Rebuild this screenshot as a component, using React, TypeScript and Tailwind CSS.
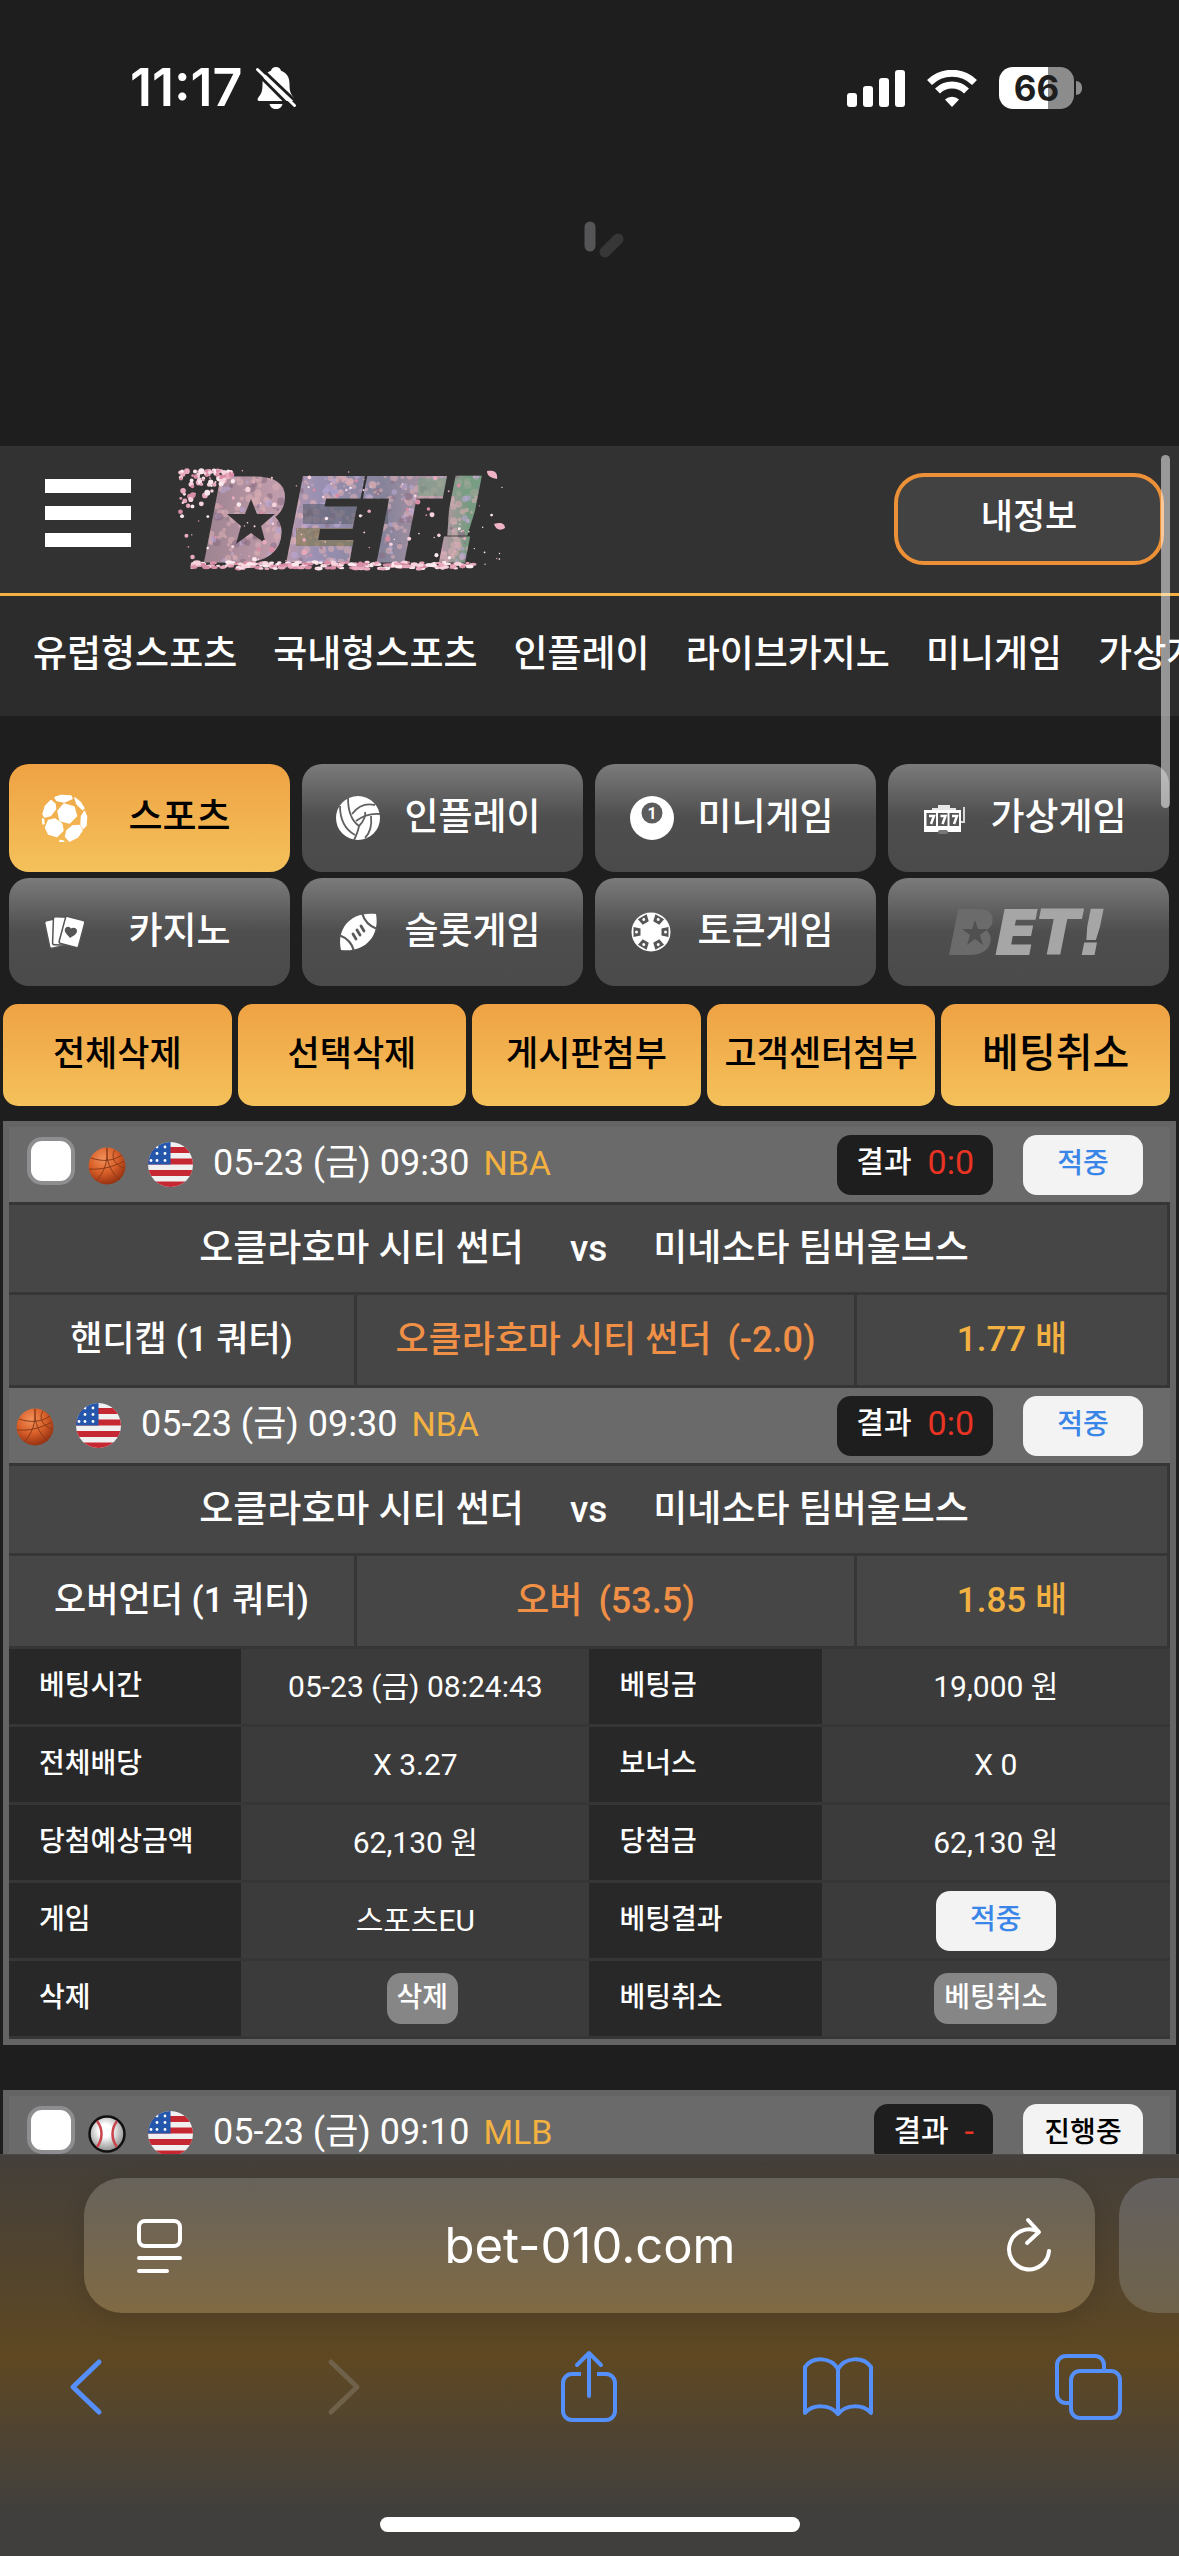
import type { ReactNode } from "react";
import { clsx } from "clsx";

const gold = "bg-linear-to-b from-[#efa243] to-[#f4c15a]";
const steel = "bg-linear-to-b from-[#7b7b7b] via-[#4e4e4e] to-[#4a4a4a]";

const navItems = ["유럽형스포츠", "국내형스포츠", "인플레이", "라이브카지노", "미니게임", "가상게임"];

const actions = ["전체삭제", "선택삭제", "게시판첨부", "고객센터첨부"];

/* ---------- status bar ---------- */

function BellOffIcon() {
  return (
    <svg viewBox="0 0 42 44" className="h-11 w-[42px]" fill="#fff">
      <path d="M21 1c-2.600 0-4.600 1.600-5 3.800C9.500 7.200 7.500 12 7.500 18c0 7-1 9.500-3.500 12.500C2 33 2 35 5 35h32c3 0 3-2 1-4.500-2.500-3-3.500-5.500-3.500-12.500 0-6-2-10.800-8.500-13.200C25.600 2.600 23.600 1 21 1z" />
      <path d="M14.500 38h13c-.6 3-3.200 5-6.500 5s-5.900-2-6.500-5z" />
      <path d="M3 -0.500l39 37" stroke="#1e1e1e" strokeWidth="3" />
      <path d="M0 5.500l37 37" stroke="#1e1e1e" strokeWidth="3" />
      <path d="M2.500 3.500l37 36" stroke="#fff" strokeWidth="3" strokeLinecap="round" />
    </svg>
  );
}

function SignalIcon() {
  return (
    <svg viewBox="0 0 58 37" className="h-[37px] w-[58px]" fill="#fff">
      <rect x="0" y="23" width="10" height="14" rx="3" />
      <rect x="16" y="16" width="10" height="21" rx="3" />
      <rect x="32" y="8" width="10" height="29" rx="3" />
      <rect x="48" y="0" width="10" height="37" rx="3" />
    </svg>
  );
}

function WifiIcon() {
  return (
    <svg viewBox="0 0 50 37" className="h-[37px] w-[50px]" fill="none" stroke="#fff" strokeWidth="7">
      <path d="M2.500 12.500a32 32 0 0 1 45 0" />
      <path d="M10.500 21a20.500 20.500 0 0 1 29 0" />
      <path d="M25 37l-7-7.500a10 10 0 0 1 14 0z" fill="#fff" stroke="none" />
    </svg>
  );
}

function StatusBar() {
  return (
    <div className="flex items-center justify-between pt-[60px] pr-[97px] pl-[130px] font-['Inter',sans-serif]">
      <div className="flex items-center gap-3">
        <span className="text-[52px] leading-[56px] font-semibold text-white">11:17</span>
        <BellOffIcon />
      </div>
      <div className="flex items-center gap-[22px]">
        <SignalIcon />
        <WifiIcon />
        <div className="flex items-center gap-0.5">
          <div className="flex h-[42px] w-[75px] items-center justify-center rounded-[14px] bg-linear-to-r from-white from-66% to-[#8c8c8c] to-66% text-[35px] leading-none font-bold text-[#1e1e1e]">
            66
          </div>
          <div className="h-3.5 w-1.5 rounded-r-full bg-[#8c8c8c]" />
        </div>
      </div>
    </div>
  );
}

function Spinner() {
  return (
    <svg viewBox="0 0 90 90" className="mx-auto mt-[101px] h-[90px] w-[90px]" strokeLinecap="round" strokeWidth="11">
      <path d="M45 10v19" stroke="#555557" />
      <path d="M60 35l13-13" stroke="#373738" />
    </svg>
  );
}

/* ---------- site header ---------- */

// Fixed seed so that the petals fall in the same spots on every render.
function scatter(count: number, seed: number) {
  let s = seed;
  const next = () => {
    s = (s * 16807) % 2147483647;
    return s / 2147483647;
  };
  return Array.from({ length: count }, () => [next(), next(), next()]);
}

const petalColors = ["#e9a9bd", "#f6d3dc", "#d78da5", "#fbe9ee"];
const blossoms = scatter(600, 77);
const loosePetals = scatter(110, 4211);
const groundPetals = scatter(230, 909);
const branchPetals = scatter(90, 313);

function BlossomLogo() {
  return (
    <svg viewBox="0 0 330 104" className="h-[104px] w-[330px] overflow-visible" role="img" aria-label="BET!">
      <defs>
        <mask id="wordmark" maskUnits="userSpaceOnUse" x="0" y="0" width="330" height="104">
          <text
            x="28"
            y="91"
            fontFamily="DejaVu Sans"
            fontWeight="700"
            fontStyle="italic"
            fontSize="108"
            fill="#fff"
            stroke="#fff"
            strokeWidth="7"
          >
            BET!
          </text>
          <rect x="50" y="22" width="44" height="60" rx="8" fill="#fff" />
        </mask>
        <linearGradient id="dusk" x1="0" y1="0" x2="1" y2="0">
          <stop offset="0.1" stopColor="#a08592" />
          <stop offset="0.3" stopColor="#c09cab" />
          <stop offset="0.42" stopColor="#9a90b2" />
          <stop offset="0.62" stopColor="#85839a" />
          <stop offset="0.8" stopColor="#b598a6" />
          <stop offset="0.88" stopColor="#769b80" />
          <stop offset="1" stopColor="#7c9a8a" />
        </linearGradient>
      </defs>
      <g mask="url(#wordmark)">
        <rect width="330" height="104" fill="url(#dusk)" />
        {blossoms.map(([a, b, c], i) => (
          <circle
            key={i}
            cx={20 + a * 290}
            cy={8 + b * 88}
            r={1 + c * 3}
            fill={i % 3 ? "#d8adb4" : i % 2 ? "#8b6f86" : "#b9a8d6"}
            opacity="0.6"
          />
        ))}
        <rect x="125" y="36" width="85" height="20" fill="#5d6272" opacity="0.65" />
        <rect x="118" y="60" width="70" height="18" fill="#7b7448" opacity="0.6" />
        <rect x="240" y="10" width="80" height="18" fill="#78a083" opacity="0.6" />
        <path d="M73 31l6 15h18l-14 12 5 18-15-11-15 11 5-18-14-12h18z" fill="#343233" />
      </g>
      {branchPetals.map(([a, b, c], i) => (
        <circle key={i} cx={2 + a * 52} cy={3 + b * b * 44 * (1.1 - a)} r={1 + c * 2} fill={petalColors[i % 4]} />
      ))}
      {loosePetals.map(([a, b, c], i) => (
        <circle key={i} cx={4 + a * 320} cy={2 + b * 96} r={0.7 + c * c * 2.2} fill={petalColors[i % 4]} />
      ))}
      {groundPetals.map(([a, b, c], i) => (
        <ellipse key={i} cx={14 + a * 282} cy={94 + b * 7} rx={2 + c * 2} ry={1 + c} fill={petalColors[i % 4]} />
      ))}
      <path d="M309 3c7-1 11 1 10 8-6-1-10-3-10-8zM316 56c6-2 11-1 11 4-5 3-9 2-11-4z" fill="#efb3c5" />
    </svg>
  );
}

function SiteHeader() {
  return (
    <header className="flex h-[150px] items-center border-b-3 border-[#f2b141] bg-[#323232] pr-[15px] pl-[45px]">
      <button type="button" aria-label="메뉴" className="mb-3.5 flex flex-col gap-[13px]">
        <span className="h-3.5 w-[86px] bg-white" />
        <span className="h-3.5 w-[86px] bg-white" />
        <span className="h-3.5 w-[86px] bg-white" />
      </button>
      <div className="ml-[47px]">
        <BlossomLogo />
      </div>
      <button
        type="button"
        className="mb-0.5 ml-auto h-[92px] w-[270px] rounded-[30px] border-4 border-[#ec9137] bg-[#424242] text-[35px] font-medium text-white"
      >
        내정보
      </button>
    </header>
  );
}

function SiteNav() {
  return (
    <nav className="flex h-[120px] items-center gap-9 overflow-hidden bg-[#2c2c2c] pb-0.5 pl-[33px] text-[37px] font-medium whitespace-nowrap text-white">
      {navItems.map((item) => (
        <a key={item} href="#">
          {item}
        </a>
      ))}
    </nav>
  );
}

/* ---------- game tabs ---------- */

function SoccerIcon() {
  return (
    <svg viewBox="0 0 48 48" className="size-12">
      <g fill="#fff" stroke="#fff" strokeLinejoin="round" strokeWidth="1.500">
        <path d="M23 10l10 3 2.500 9-7 7-9.500-2.500-2-9.500z" />
        <path d="M14 3.500l6-2 10 .5 1 2.500-8 3.500-7-1.500z" />
        <path d="M34 4l5 4 4 6.500-1.500 1-5.500-5.500z" />
        <path d="M10 6.500l4 3.500.5 5-5 6.500L3.500 23 2 20l2.500-8z" />
        <path d="M43.500 17.500l2 5-.5 9-3 3-2-4 .5-8z" />
        <path d="M7.500 26.500L14 25l6.500 4.500 1.500 7-6 6-8.500-2.500-3-6.500z" />
        <path d="M31.500 32l7-.5 2.500 5-4.500 6.500-8 4-4-4.500 1.500-6z" />
        <path d="M1.500 25l1 .5.5 4-1 .5zM19 46.500l3 .5 1 1h-4z" />
      </g>
    </svg>
  );
}

function VolleyballIcon() {
  return (
    <svg viewBox="0 0 48 48" className="size-12">
      <circle cx="24" cy="24" r="22" fill="#fff" />
      <g fill="none" stroke="#606060" strokeWidth="1.800">
        <path d="M14 4c0 13 4 23 11 28-1 6-3 10-5 14" />
        <path d="M18 20C24 12 32 9 41 11M25 32c5-5 7-11 6-14" />
        <path d="M6 12c0 14 6 24 15 29" />
        <path d="M22 27c8-6 15-8 24-7" />
        <path d="M37 22c1 9-1 17-6 22" />
      </g>
    </svg>
  );
}

function BilliardIcon() {
  return (
    <svg viewBox="0 0 48 48" className="size-12">
      <circle cx="25" cy="24" r="22" fill="#fff" />
      <circle cx="25" cy="19" r="10.500" fill="#5c5c5c" />
      <text x="25" y="25" textAnchor="middle" fontFamily="Roboto" fontWeight="700" fontSize="16" fill="#fff">
        1
      </text>
    </svg>
  );
}

function SlotIcon() {
  return (
    <svg viewBox="0 0 48 48" className="size-12">
      <path d="M12 14h6v-3h12v3h6v3H12z" fill="#e8e8e8" />
      <path d="M4 16h37v22H4z" fill="#fff" />
      <path d="M41 28h3V13" stroke="#d6d6d6" strokeWidth="2" fill="none" />
      <path d="M6.500 19h9.500v13H6.500zM18 19h9.500v13H18zM29.500 19h9.500v13h-9.500z" fill="#565656" />
      <path d="M9 22h5l-3 8M20.500 22h5l-3 8M32 22h5l-3 8" stroke="#fff" strokeWidth="2.500" fill="none" />
      <rect x="18" y="36" width="10" height="4" rx="2" fill="#777" />
    </svg>
  );
}

function CardsIcon() {
  return (
    <svg viewBox="0 0 48 48" className="size-12" stroke="#555" strokeWidth="1.500">
      <rect x="6" y="11" width="18" height="28" rx="2" fill="#fff" transform="rotate(-12 15 25)" />
      <rect x="12" y="9" width="18" height="28" rx="2" fill="#fff" transform="rotate(2 21 23)" />
      <rect x="21" y="10" width="20" height="28" rx="2" fill="#fff" transform="rotate(15 31 24)" />
      <path d="M29 30c-4-5-6-6-5-9 1-2.500 4-3 6-.5 2.500-1.500 6-.5 6 2.500 0 3-3 4.500-7 7z" fill="#555" stroke="none" />
    </svg>
  );
}

function FootballIcon() {
  return (
    <svg viewBox="0 0 48 48" className="size-12">
      <path d="M7 42C2 20 17 3 42 6c4 22-11 39-35 36z" fill="#fff" />
      <path d="M28 5c2 7 7 13 15 16M5 27c8 3 13 8 15 16" fill="none" stroke="#5a5a5a" strokeWidth="2.200" />
      <path d="M19 26l3 5M23 22l3 5M27 18l3 5" stroke="#5a5a5a" strokeWidth="2.800" strokeLinecap="round" />
    </svg>
  );
}

function ChipIcon() {
  return (
    <svg viewBox="0 0 48 48" className="size-12">
      <circle cx="24" cy="24" r="19.500" fill="#fff" />
      {[0, 60, 120, 180, 240, 300].map((deg) => (
        <g key={deg} transform={`rotate(${deg + 30} 24 24)`}>
          <path d="M19 6.500h10l-1.500 7h-7z" fill="#555" />
          <circle cx="24" cy="9.500" r="1.500" fill="#fff" />
        </g>
      ))}
    </svg>
  );
}

const tabs: { label: string; icon: ReactNode; active?: boolean }[] = [
  { label: "스포츠", icon: <SoccerIcon />, active: true },
  { label: "인플레이", icon: <VolleyballIcon /> },
  { label: "미니게임", icon: <BilliardIcon /> },
  { label: "가상게임", icon: <SlotIcon /> },
  { label: "카지노", icon: <CardsIcon /> },
  { label: "슬롯게임", icon: <FootballIcon /> },
  { label: "토큰게임", icon: <ChipIcon /> },
];

function GameTabs() {
  return (
    <div className="grid grid-cols-4 gap-x-3 gap-y-1.5 pr-2.5 pl-[9px]">
      {tabs.map((tab) => (
        <button
          key={tab.label}
          type="button"
          className={clsx(
            "flex h-[108px] items-center rounded-[20px] pr-5 pl-8 text-[37px] font-medium",
            tab.active ? [gold, "text-black"] : [steel, "text-white"],
          )}
        >
          <span className="flex size-12 shrink-0 items-center justify-center">{tab.icon}</span>
          <span className="flex-1 text-center">{tab.label}</span>
        </button>
      ))}
      <button type="button" aria-label="BET!" className={clsx("flex h-[108px] items-center justify-center rounded-[20px]", steel)}>
        <svg viewBox="0 0 184 90" className="h-[90px] w-[184px]">
          <text
            x="12"
            y="67"
            fontFamily="DejaVu Sans"
            fontWeight="700"
            fontStyle="italic"
            fontSize="61"
            fill="#a6a6a6"
            stroke="#a6a6a6"
            strokeWidth="2"
          >
            <tspan fill="#6b6b6b" stroke="#6b6b6b">B</tspan>ET!
          </text>
          <rect x="25" y="28" width="25" height="35" rx="4" fill="#6b6b6b" />
          <path d="M38 33l3 9h10l-8 6 3 10-8-6-8 6 3-10-8-6h10z" fill="#505050" />
        </svg>
      </button>
    </div>
  );
}

function Actions() {
  return (
    <div className="mt-[18px] grid grid-cols-5 gap-1.5 pr-[9px] pl-[3px] text-black">
      {actions.map((label) => (
        <button key={label} type="button" className={clsx("h-[102px] rounded-[15px] text-[35px] font-medium whitespace-nowrap", gold)}>
          {label}
        </button>
      ))}
      <button type="button" className={clsx("h-[102px] rounded-[15px] pb-0.5 text-[40px] font-medium", gold)}>
        베팅취소
      </button>
    </div>
  );
}

/* ---------- bet slips ---------- */

function Basketball() {
  return (
    <svg viewBox="0 0 38 42" className="h-[42px] w-[38px] shrink-0">
      <defs>
        <radialGradient id="leather" cx="0.4" cy="0.3" r="0.75">
          <stop offset="0" stopColor="#f2905a" />
          <stop offset="0.5" stopColor="#d9602a" />
          <stop offset="1" stopColor="#8e2c0e" />
        </radialGradient>
      </defs>
      <circle cx="19" cy="22" r="18.500" fill="url(#leather)" />
      <g fill="none" stroke="#8a3a18" strokeWidth="1">
        <path d="M3 14c12 4 22 3 31-3M1 25c12 1 24-2 35-8M19 4c-1 12 3 24 13 32M19 4c1 14-3 25-11 33M27 6c-4 6-2 14 9 18" />
      </g>
    </svg>
  );
}

function Baseball() {
  return (
    <svg viewBox="0 0 38 42" className="h-[42px] w-[38px] shrink-0">
      <defs>
        <radialGradient id="hide" cx="0.45" cy="0.4" r="0.6">
          <stop offset="0.3" stopColor="#fff" />
          <stop offset="1" stopColor="#8c8c8c" />
        </radialGradient>
      </defs>
      <circle cx="19" cy="21" r="17.500" fill="url(#hide)" stroke="#111" strokeWidth="2.500" />
      <path d="M9 8c6 8 6 18 0 26M29 8c-6 8-6 18 0 26" fill="none" stroke="#c9424c" strokeWidth="2.500" />
    </svg>
  );
}

function UsFlag() {
  return (
    <svg viewBox="0 0 45 45" className="mr-5 ml-[22px] size-[45px] shrink-0" role="img" aria-label="USA">
      <defs>
        <clipPath id="roundel">
          <circle cx="22.500" cy="22.500" r="22.500" />
        </clipPath>
      </defs>
      <g clipPath="url(#roundel)">
        <rect width="45" height="45" fill="#f0f0f0" />
        <path d="M0 8h45M0 19.500h45M0 31h45M0 42.500h45" stroke="#c62833" strokeWidth="6" />
        <rect width="22.500" height="22.500" fill="#2456ab" />
        <g fill="#fff">
          <circle cx="9" cy="5" r="1.400" />
          <circle cx="17" cy="5" r="1.400" />
          <circle cx="9" cy="11.500" r="1.400" />
          <circle cx="17" cy="11.500" r="1.400" />
          <circle cx="3" cy="18.500" r="1.400" />
          <circle cx="9" cy="18.500" r="1.400" />
          <circle cx="17" cy="18.500" r="1.400" />
        </g>
      </g>
    </svg>
  );
}

type SlipHeaderProps = {
  ball: ReactNode;
  date: string;
  league: string;
  score: string;
  state: string;
  won?: boolean;
  selectable?: boolean;
};

function StateBadge({ state, won }: { state: string; won?: boolean }) {
  return (
    <span
      className={clsx(
        "inline-flex h-[60px] w-[120px] items-center justify-center rounded-[14px] bg-[#f3f3f3] pb-0.5 align-middle text-[28px] font-medium",
        won ? "text-[#3a86e8]" : "text-black",
      )}
    >
      {state}
    </span>
  );
}

function SlipHeader({ ball, date, league, score, state, won, selectable }: SlipHeaderProps) {
  return (
    <div className={clsx("flex h-[75px] items-center bg-[#6a6a6a] pr-[27px]", selectable ? "pl-[18px]" : "pl-[7px]")}>
      {selectable && (
        <input
          type="checkbox"
          aria-label={`${date} ${league}`}
          className="mr-[13px] mb-2 size-12 shrink-0 appearance-none rounded-[15px] border-4 border-[#8e8e91] bg-white"
        />
      )}
      {ball}
      <UsFlag />
      <span className="pb-1 text-[36px] leading-none whitespace-nowrap text-white">{date}</span>
      <span className="ml-3.5 pb-1 text-[34px] leading-none text-[#f2b141]">{league}</span>
      <span className="ml-auto flex h-[60px] items-center gap-4 rounded-[14px] bg-[#1e1e1e] px-[19px] pb-1.5 text-[30px] font-medium whitespace-nowrap text-white">
        결과 <span className="text-[34px] leading-none font-normal text-[#e93323]">{score}</span>
      </span>
      <span className="ml-[30px] flex">
        <StateBadge state={state} won={won} />
      </span>
    </div>
  );
}

function Match({ home, away, market, pick, line, odds }: Record<"home" | "away" | "market" | "pick" | "line" | "odds", string>) {
  return (
    <>
      <div className="flex h-[93px] items-center justify-center gap-[46px] border-y-3 border-r-3 border-[#363636] bg-[#464646] pr-2 text-[37px] font-medium whitespace-nowrap text-white">
        <span>{home}</span>
        <span>vs</span>
        <span>{away}</span>
      </div>
      <div className="grid h-[93px] grid-cols-[348fr_500fr_313fr] border-b-3 border-[#363636] bg-[#464646] text-[35px] font-medium whitespace-nowrap *:flex *:items-center *:justify-center *:border-r-3 *:border-[#363636]">
        <div className="text-white">{market}</div>
        <div className="gap-4 text-[36px] text-[#f08f46]">
          <span>{pick}</span>
          <span>{line}</span>
        </div>
        <div className="text-[#f2b141]">{odds}</div>
      </div>
    </>
  );
}

const grayButton = "h-[51px] rounded-[14px] bg-[#868686] px-2.5 pb-0.5 align-middle text-[28px] font-medium";

const details: [string, ReactNode, string, ReactNode][] = [
  ["베팅시간", "05-23 (금) 08:24:43", "베팅금", "19,000 원"],
  ["전체배당", "X 3.27", "보너스", "X 0"],
  ["당첨예상금액", "62,130 원", "당첨금", "62,130 원"],
  ["게임", "스포츠EU", "베팅결과", <StateBadge state="적중" won />],
  [
    "삭제",
    <button type="button" className={clsx(grayButton, "ml-3.5")}>삭제</button>,
    "베팅취소",
    <button type="button" className={grayButton}>베팅취소</button>,
  ],
];

function DetailTable() {
  return (
    <table className="w-full table-fixed border-separate border-spacing-0 whitespace-nowrap text-white">
      <colgroup>
        <col className="w-[20%]" />
        <col className="w-[30%]" />
        <col className="w-[20%]" />
        <col className="w-[30%]" />
      </colgroup>
      <tbody className="[&_td]:border-b-3 [&_td]:border-[#363636] [&_td]:bg-[#3b3b3b] [&_td]:p-0 [&_td]:text-center [&_td]:text-[30px] [&_th]:border-b-3 [&_th]:border-[#363636] [&_th]:bg-[#282828] [&_th]:pt-0 [&_th]:pb-0.5 [&_th]:pl-[30px] [&_th]:text-left [&_th]:text-[28px] [&_th]:font-medium">
        {details.map(([labelA, valueA, labelB, valueB]) => (
          <tr key={labelA} className="h-[78px]">
            <th scope="row">{labelA}</th>
            <td>{valueA}</td>
            <th scope="row">{labelB}</th>
            <td>{valueB}</td>
          </tr>
        ))}
      </tbody>
    </table>
  );
}

function Slips() {
  const teams = { home: "오클라호마 시티 썬더", away: "미네소타 팀버울브스" };
  const nba = { ball: <Basketball />, date: "05-23 (금) 09:30", league: "NBA", score: "0:0", state: "적중", won: true };
  return (
    <div className="mt-[15px] flex flex-col gap-[45px] px-[3px]">
      <section className="border-6 border-[#646464]">
        <SlipHeader {...nba} selectable />
        <Match {...teams} market="핸디캡 (1 쿼터)" pick="오클라호마 시티 썬더" line="(-2.0)" odds="1.77 배" />
        <SlipHeader {...nba} />
        <Match {...teams} market="오버언더 (1 쿼터)" pick="오버" line="(53.5)" odds="1.85 배" />
        <DetailTable />
      </section>
      <section className="border-6 border-[#646464]">
        <SlipHeader ball={<Baseball />} date="05-23 (금) 09:10" league="MLB" score="-" state="진행중" selectable />
      </section>
    </div>
  );
}

/* ---------- browser chrome ---------- */

const tool = "flex h-20 w-20 items-center justify-center";
const stroke = { fill: "none", stroke: "#5590fa", strokeWidth: 5, strokeLinecap: "round", strokeLinejoin: "round" } as const;

function BrowserBar() {
  return (
    <footer className="shrink-0 overflow-hidden border-t border-[#4c4a47] bg-linear-to-b from-[#433f3a] via-[#5f4821] via-50% to-[#403f3d] to-90% font-['Inter',sans-serif]">
      <div className="mt-[23px] ml-[84px] flex gap-6">
        <div className="flex h-[135px] w-[calc(100vw-168px)] shrink-0 items-center justify-between rounded-[38px] bg-linear-to-b from-[#67625b] to-[#806a43] pr-10 pl-[49px] shadow-[0_6px_24px_rgba(0,0,0,0.12)]">
          <button type="button" aria-label="페이지 메뉴">
            <svg viewBox="0 0 52 58" className="h-[58px] w-[52px]" fill="none" stroke="#fff" strokeWidth="4" strokeLinecap="round">
              <rect x="6" y="4" width="41" height="25" rx="6" />
              <path d="M6 41h41M6 54h28" />
            </svg>
          </button>
          <a href="#" className="pr-2 text-[49px] leading-none text-white">
            bet-010.com
          </a>
          <button type="button" aria-label="새로고침">
            <svg viewBox="0 0 52 58" className="h-[58px] w-[52px]" fill="none" stroke="#fff" strokeWidth="4" strokeLinecap="round" strokeLinejoin="round">
              <path d="M35 14.500A20 20 0 1 0 46 34" />
              <path d="M25 3l11 12-12 11" />
            </svg>
          </button>
        </div>
        <div className="h-[135px] w-[200px] shrink-0 rounded-[38px] bg-linear-to-b from-[#636060] to-[#70634a]" />
      </div>
      <div className="mt-[34px] flex justify-between pr-[51px] pl-[46px]">
        <button type="button" aria-label="뒤로" className={tool}>
          <svg viewBox="0 0 60 60" className="size-[60px]" {...stroke}>
            <path d="M43 5L17 30l26 25" />
          </svg>
        </button>
        <button type="button" aria-label="앞으로" className={tool}>
          <svg viewBox="0 0 60 60" className="size-[60px]" {...stroke} stroke="#6f614a">
            <path d="M24 5l26 25-26 25" />
          </svg>
        </button>
        <button type="button" aria-label="공유" className={tool}>
          <svg viewBox="0 0 60 74" className="ml-1 h-[74px] w-[60px]" {...stroke} strokeWidth={4}>
            <path d="M22 24h-9a9 9 0 0 0-9 9v28a9 9 0 0 0 9 9h34a9 9 0 0 0 9-9V33a9 9 0 0 0-9-9h-9" strokeLinecap="butt" />
            <path d="M30 46V4M18 15L30 3l12 12" />
          </svg>
        </button>
        <button type="button" aria-label="책갈피" className={tool}>
          <svg viewBox="0 0 74 62" className="h-[62px] w-[74px]" {...stroke} strokeWidth={4}>
            <path d="M37 13C30 1 12 0 4 11v46c8-9 25-9 33 1 8-10 25-10 33-1V11C62 0 44 1 37 13zM37 13v45" />
          </svg>
        </button>
        <button type="button" aria-label="탭" className={tool}>
          <svg viewBox="0 0 72 70" className="h-[70px] w-[72px]" {...stroke} strokeWidth={4}>
            <rect x="19" y="19" width="49" height="47" rx="9" />
            <path d="M19 51h-5a9 9 0 0 1-9-9V13a9 9 0 0 1 9-9h29a9 9 0 0 1 9 9v5" />
          </svg>
        </button>
      </div>
      <div className="mx-auto mt-[90px] mb-6 h-[15px] w-[420px] rounded-full bg-white" />
    </footer>
  );
}

export default function App() {
  return (
    <div className="flex h-screen flex-col overflow-hidden bg-[#1e1e1e] font-['Roboto','Noto_Sans_CJK_KR',sans-serif]">
      <div className="h-[446px] shrink-0">
        <StatusBar />
        <Spinner />
      </div>
      <main className="relative min-h-0 flex-1 overflow-hidden">
        <SiteHeader />
        <SiteNav />
        <div className="pt-12">
          <GameTabs />
          <Actions />
          <Slips />
        </div>
        <div className="absolute top-[9px] right-[9px] h-[353px] w-[9px] rounded-full bg-white/50" />
      </main>
      <BrowserBar />
    </div>
  );
}
